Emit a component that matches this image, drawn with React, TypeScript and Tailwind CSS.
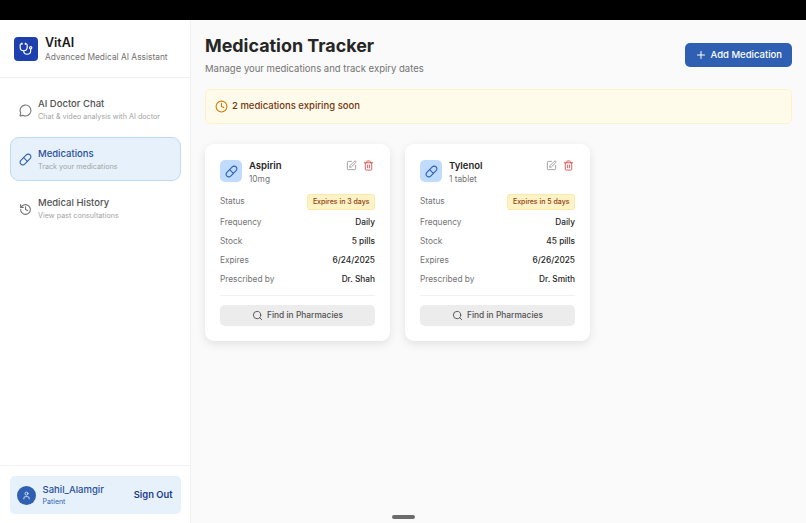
import { Clock, History, MessageCircle, Pill, Plus, Search, SquarePen, Stethoscope, Trash2, User } from "lucide-react";

const meds = [
    { name: "Aspirin", dose: "10mg", status: "Expires in 3 days", frequency: "Daily", stock: "5 pills", expires: "6/24/2025", doctor: "Dr. Shah" },
    { name: "Tylenol", dose: "1 tablet", status: "Expires in 5 days", frequency: "Daily", stock: "45 pills", expires: "6/26/2025", doctor: "Dr. Smith" },
];

function NavItem({ icon, title, subtitle, active }: { icon: React.ReactNode; title: string; subtitle: string; active?: boolean }) {
    return (
        <div className={`flex h-[44px] items-center gap-[6px] rounded-[9px] border px-[8.5px] pt-[1px] ${active ? "border-[#bfdbf3] bg-[#e6f1fb]" : "border-transparent"}`}>
            <span className={active ? "text-[#2f5fb3]" : "text-[#737373]"}>{icon}</span>
            <div className="min-w-0">
                <div className={`text-[9.5px] leading-[14px] font-medium ${active ? "text-[#2a4f9e]" : "text-[#525252]"}`}>{title}</div>
                <div className="text-[7.2px] leading-[12px] text-[#a3a3a3]">{subtitle}</div>
            </div>
        </div>
    );
}

function Row({ label, value }: { label: string; value: string }) {
    return (
        <div className="flex h-[19px] items-center justify-between text-[8.3px]">
            <span className="text-[#737373]">{label}</span>
            <span className="font-medium text-[#262626]">{value}</span>
        </div>
    );
}

function MedCard({ med }: { med: (typeof meds)[number] }) {
    return (
        <div className="h-[197px] w-[185px] rounded-[9px] bg-white px-[15px] pt-[15px] shadow-[0_3px_10px_rgba(0,0,0,0.1)]">
            <div className="flex items-start justify-between">
                <div className="flex gap-[7px]">
                    <div className="mt-[1px] flex h-[22px] w-[22px] items-center justify-center rounded-[5px] bg-[#bfdbfe] text-[#2f5fb3]">
                        <Pill size={13} />
                    </div>
                    <div>
                        <div className="text-[9.5px] leading-[13px] font-semibold text-[#262626]">{med.name}</div>
                        <div className="mt-[1px] text-[8.3px] leading-[13px] text-[#737373]">{med.dose}</div>
                    </div>
                </div>
                <div className="flex gap-[5.5px] pt-[1px] pr-[1.5px]">
                    <SquarePen size={11} className="text-[#999999]" />
                    <Trash2 size={11} className="text-[#e05252]" />
                </div>
            </div>
            <div className="mt-[6px] flex h-[19px] items-center justify-between text-[8.3px]">
                <span className="text-[#737373]">Status</span>
                <span className="rounded-[3px] border border-[#fde8a8] bg-[#fef3c7] px-[4.5px] py-[0.5px] text-[7px] leading-[13px] font-medium text-[#92400e]">{med.status}</span>
            </div>
            <div className="mt-[2px]">
                <Row label="Frequency" value={med.frequency} />
                <Row label="Stock" value={med.stock} />
                <Row label="Expires" value={med.expires} />
                <Row label="Prescribed by" value={med.doctor} />
            </div>
            <div className="mt-[6px] border-t border-[#f0f0f0] pt-[9px]">
                <div className="flex h-[21px] items-center justify-center gap-[4px] rounded-[5px] bg-[#ececec] text-[8.4px] font-medium text-[#525252]">
                    <Search size={11} />
                    Find in Pharmacies
                </div>
            </div>
        </div>
    );
}

export default function App() {
    return (
        <div className="flex h-[523px] w-[806px] flex-col overflow-hidden font-['Inter',sans-serif]">
            <div className="h-[20px] shrink-0 bg-black" />
            <div className="relative flex min-h-0 flex-1">
                <aside className="flex w-[191px] shrink-0 flex-col border-r border-[#efefef] bg-white">
                    <div className="flex h-[58px] items-center gap-[7px] border-b border-[#efefef] px-[14px]">
                        <div className="flex h-[24px] w-[24px] items-center justify-center rounded-[4px] bg-[#1e40af] text-white">
                            <Stethoscope size={14} />
                        </div>
                        <div>
                            <div className="text-[12.5px] leading-[15px] font-semibold text-[#171717]">VitAI</div>
                            <div className="mt-[1px] text-[8.4px] leading-[12px] whitespace-nowrap text-[#737373]">Advanced Medical AI Assistant</div>
                        </div>
                    </div>
                    <nav className="flex flex-1 flex-col gap-[5.5px] px-[9.5px] pt-[9.5px]">
                        <NavItem icon={<MessageCircle size={13} />} title="AI Doctor Chat" subtitle="Chat & video analysis with AI doctor" />
                        <NavItem icon={<Pill size={13} />} title="Medications" subtitle="Track your medications" active />
                        <NavItem icon={<History size={13} />} title="Medical History" subtitle="View past consultations" />
                    </nav>
                    <div className="border-t border-[#f3f3f3] px-[9.5px] pt-[10px] pb-[9px]">
                        <div className="flex h-[38px] items-center justify-between rounded-[5px] bg-[#e6f1fb] pr-[8px] pl-[7px]">
                            <div className="flex items-center gap-[7px]">
                                <div className="flex h-[19px] w-[19px] items-center justify-center rounded-full bg-[#2f5fb3] text-white">
                                    <User size={9} />
                                </div>
                                <div>
                                    <div className="text-[9.5px] leading-[13px] font-medium text-[#2a4f9e]">Sahil_Alamgir</div>
                                    <div className="mt-[1px] text-[7px] leading-[10px] text-[#2f5fb3]">Patient</div>
                                </div>
                            </div>
                            <span className="text-[9.4px] font-semibold text-[#1e3a8a]">Sign Out</span>
                        </div>
                    </div>
                </aside>
                <main className="min-w-0 flex-1 bg-[#fafafa] pt-[14px] pr-[14px] pl-[14px]">
                    <div className="flex items-start justify-between">
                        <div>
                            <h1 className="text-[17.9px] leading-[23px] font-bold text-[#262626]">Medication Tracker</h1>
                            <p className="mt-[5px] text-[9.5px] leading-[14px] text-[#737373]">Manage your medications and track expiry dates</p>
                        </div>
                        <div className="mt-[9px] flex h-[24px] items-center gap-[3.5px] rounded-[5px] bg-[#2f5fb3] px-[10px] text-[9.5px] font-medium text-white">
                            <Plus size={12} />
                            Add Medication
                        </div>
                    </div>
                    <div className="mt-[13px] flex h-[35px] items-center gap-[4px] rounded-[5px] border border-[#fdf3c8] bg-[#fffbeb] px-[9px] text-[9.5px] font-medium text-[#78350f]">
                        <Clock size={13} className="text-[#d97706]" />
                        2 medications expiring soon
                    </div>
                    <div className="mt-[20px] flex gap-[15px]">
                        {meds.map((med) => (
                            <MedCard key={med.name} med={med} />
                        ))}
                    </div>
                </main>
                <div className="absolute bottom-[4px] left-[392px] h-[4px] w-[23px] rounded-full bg-[#6b6b6b]" />
            </div>
        </div>
    );
}
